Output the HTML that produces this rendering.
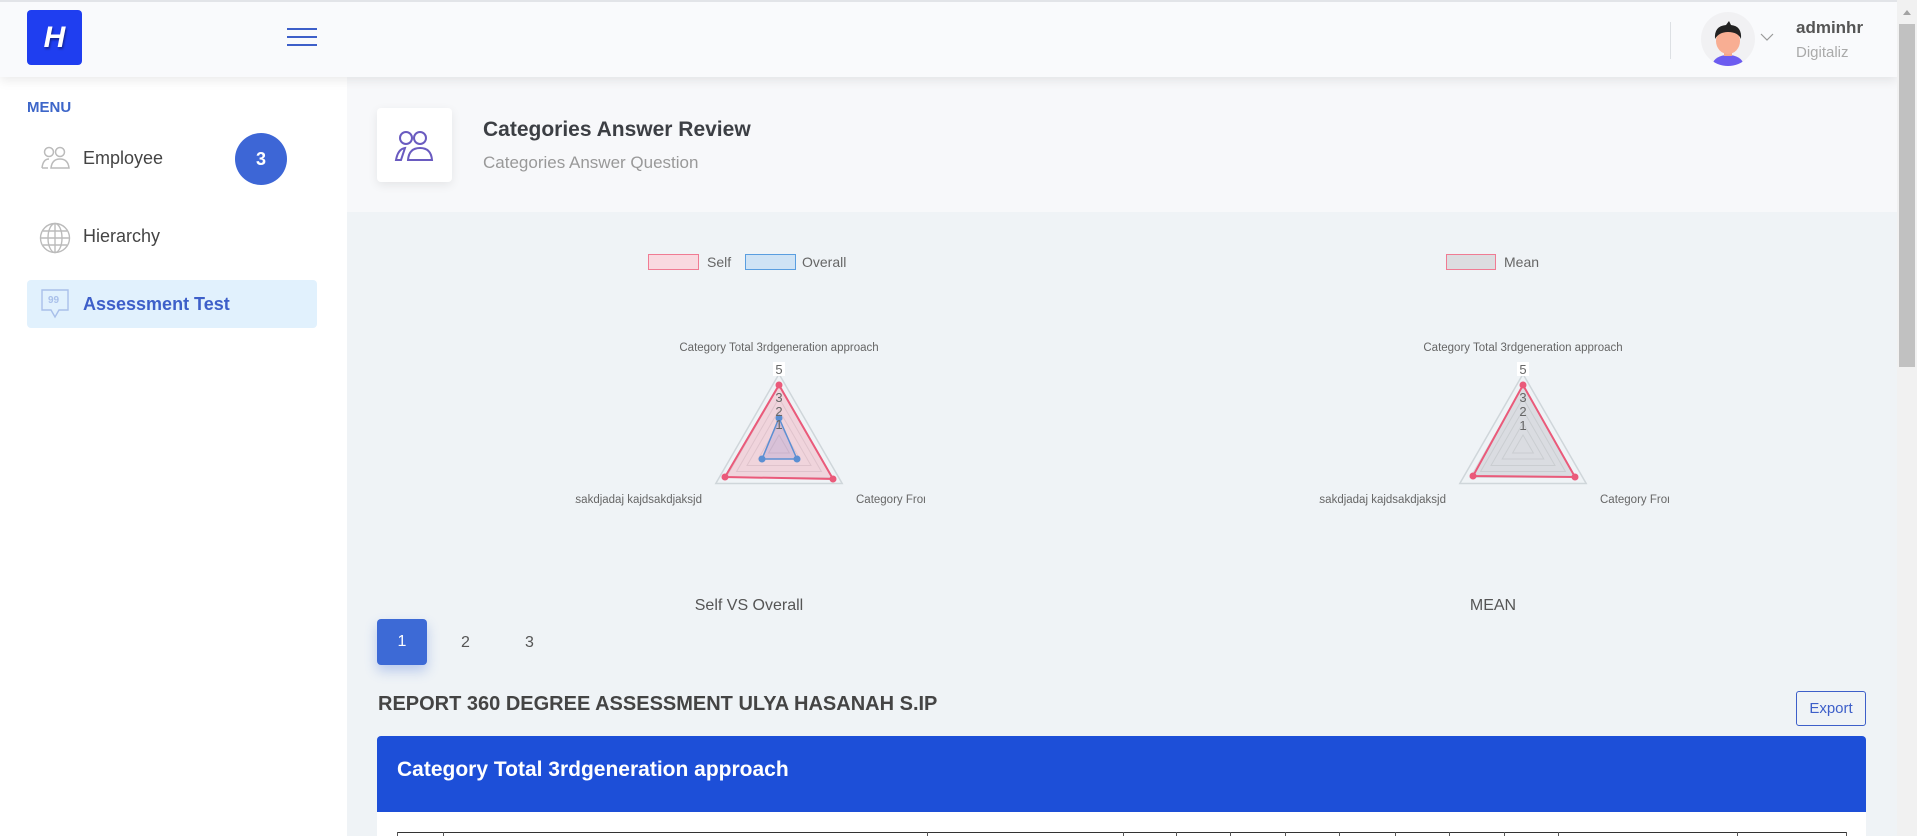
<!DOCTYPE html>
<html><head><meta charset="utf-8"><style>
*{box-sizing:border-box;margin:0;padding:0}
body{width:1917px;height:836px;overflow:hidden;background:#eff3f6;font-family:"Liberation Sans",sans-serif;position:relative}
.a{position:absolute}
</style></head><body>
<!-- header -->
<div class="a" style="left:0;top:0;width:1897px;height:77px;background:#f9fafc;border-top:2px solid #e2e4e8;box-shadow:0 4px 10px rgba(0,0,0,0.08);z-index:3"></div>
<div class="a" style="left:27px;top:10px;width:55px;height:55px;background:#1f3ef0;border-radius:4px;z-index:4;color:#fff;font-weight:bold;font-style:italic;font-size:30px;text-align:center;line-height:55px;text-shadow:1px 2px 2px rgba(0,0,0,.4)">H</div>
<div class="a" style="left:287px;top:28px;width:30px;z-index:4">
<div style="height:2px;background:#3d5fc9;margin-bottom:6px"></div><div style="height:2px;background:#3d5fc9;margin-bottom:6px"></div><div style="height:2px;background:#3d5fc9"></div></div>
<div class="a" style="left:1670px;top:22px;width:1px;height:37px;background:#dde0e4;z-index:4"></div>
<div class="a" style="left:1701px;top:12px;width:54px;height:54px;border-radius:50%;background:#f1f1f3;z-index:4;overflow:hidden">
<svg width="54" height="54" viewBox="0 0 54 54"><ellipse cx="27" cy="52" rx="15" ry="9" fill="#6c5cf0"/><rect x="23" y="36" width="8" height="8" fill="#f4a88c"/><ellipse cx="27" cy="29" rx="12" ry="13" fill="#f8ae93"/><path d="M14 27 Q13 14 25 13 L28 9 L30 13 Q41 14 40 27 Q37 20 27 20 Q18 20 14 27Z" fill="#222"/></svg></div>
<svg class="a" style="left:1760px;top:33px;z-index:4" width="14" height="9"><path d="M1 1 L7 7 L13 1" stroke="#999" fill="none" stroke-width="1.2"/></svg>
<div class="a" style="left:1796px;top:18px;font-size:17px;font-weight:bold;color:#555;z-index:4">adminhr</div>
<div class="a" style="left:1796px;top:44px;font-size:15px;color:#aaa;z-index:4">Digitaliz</div>
<!-- scrollbar -->
<div class="a" style="left:1897px;top:0;width:20px;height:836px;background:#f1f1f1;z-index:5"></div>
<div class="a" style="left:1899px;top:24px;width:16px;height:343px;background:#c1c1c1;z-index:6"></div>
<svg class="a" style="left:1901px;top:8px;z-index:6" width="12" height="8"><path d="M2 7 L6 2 L10 7Z" fill="#a3a3a3"/></svg>
<!-- sidebar -->
<div class="a" style="left:0;top:77px;width:347px;height:759px;background:#fff"></div>
<div class="a" style="left:27px;top:99px;font-size:15px;font-weight:bold;color:#3d66c9">MENU</div>
<svg class="a" style="left:40px;top:146px" width="30" height="24" viewBox="0 0 30 24" fill="none" stroke="#bbb" stroke-width="1.5"><circle cx="9" cy="6" r="4.5"/><circle cx="20" cy="6" r="4.5"/><path d="M2 22 Q3 13 9 13 M8 22 L2 22"/><path d="M11 22 Q12 13 20 13 Q28 13 29 22 Z"/></svg>
<div class="a" style="left:83px;top:148px;font-size:18px;color:#444">Employee</div>
<div class="a" style="left:235px;top:133px;width:52px;height:52px;border-radius:50%;background:#3d66d6;color:#fff;font-weight:bold;font-size:18px;text-align:center;line-height:52px">3</div>
<svg class="a" style="left:39px;top:222px" width="32" height="32" viewBox="0 0 32 32" fill="none" stroke="#bbb" stroke-width="1.4"><circle cx="16" cy="16" r="14.5"/><ellipse cx="16" cy="16" rx="7" ry="14.5"/><line x1="16" y1="1.5" x2="16" y2="30.5"/><line x1="1.5" y1="16" x2="30.5" y2="16"/><line x1="4" y1="9" x2="28" y2="9"/><line x1="4" y1="23" x2="28" y2="23"/></svg>
<div class="a" style="left:83px;top:226px;font-size:18px;color:#444">Hierarchy</div>
<div class="a" style="left:27px;top:280px;width:290px;height:48px;background:#e1f1fd;border-radius:4px"></div>
<svg class="a" style="left:40px;top:288px" width="30" height="32" viewBox="0 0 30 32" fill="none" stroke="#a9c0ea" stroke-width="1.4"><path d="M2 2 H28 V22 H19 L15 29 L11 22 H2 Z"/><text x="8" y="15" font-size="10" fill="#a9c0ea" stroke="none" font-weight="bold">99</text></svg>
<div class="a" style="left:83px;top:294px;font-size:18px;font-weight:bold;color:#3d5fc9">Assessment Test</div>
<!-- page header -->
<div class="a" style="left:347px;top:77px;width:1550px;height:135px;background:#f7f8fa"></div>
<div class="a" style="left:377px;top:108px;width:75px;height:74px;background:#fff;border-radius:4px;box-shadow:0 3px 10px rgba(0,0,0,0.08)"></div>
<svg class="a" style="left:394px;top:130px" width="42" height="32" viewBox="0 0 42 32" fill="none" stroke="#6a5bc0" stroke-width="2"><circle cx="12" cy="8" r="6"/><circle cx="26" cy="8" r="6"/><path d="M2 30 Q4 19 11 18 L7 30 Z"/><path d="M14 30 Q15 18 26 18 Q37 18 38 30 Z"/></svg>
<div class="a" style="left:483px;top:118px;font-size:21px;font-weight:bold;color:#3c3f44">Categories Answer Review</div>
<div class="a" style="left:483px;top:153px;font-size:17px;color:#999">Categories Answer Question</div>
<!-- legends -->
<div class="a" style="left:648px;top:254px;width:51px;height:16px;background:#f9d9e0;border:1.5px solid #f07b93"></div>
<div class="a" style="left:707px;top:254px;font-size:14px;color:#666">Self</div>
<div class="a" style="left:745px;top:254px;width:51px;height:16px;background:#cfe3f5;border:1.5px solid #5a9ee0"></div>
<div class="a" style="left:802px;top:254px;font-size:14px;color:#666">Overall</div>
<div class="a" style="left:1446px;top:254px;width:50px;height:16px;background:#dcdde0;border:1.5px solid #f07b93"></div>
<div class="a" style="left:1504px;top:254px;font-size:14px;color:#666">Mean</div>
<!-- charts -->
<svg class="a" style="left:575px;top:330px" width="350" height="190" font-family="Liberation Sans, sans-serif">
<g transform="translate(204,117)">
<g fill="none" stroke="#d9dde0" stroke-width="1">
<polygon points="0,-73 63.2,36.5 -63.2,36.5" stroke="#cfd6da" stroke-width="1.5"/>
<polygon points="0,-61 52.8,30.5 -52.8,30.5"/><polygon points="0,-49 42.4,24.5 -42.4,24.5"/>
<polygon points="0,-37 32,18.5 -32,18.5"/><polygon points="0,-24 20.8,12 -20.8,12"/><polygon points="0,-12 10.4,6 -10.4,6"/></g>
<polygon points="0,-62 54,32 -54,30" fill="rgba(242,120,145,0.25)" stroke="#ea5a7a" stroke-width="2"/>
<polygon points="0,-29 18,12 -17,12" fill="rgba(120,120,200,0.2)" stroke="#5b8fd3" stroke-width="1.5"/>
<g fill="#ea5a7a"><circle cx="0" cy="-62" r="3.5"/><circle cx="54" cy="32" r="3.5"/><circle cx="-54" cy="30" r="3.5"/></g>
<g fill="#5b8fd3"><circle cx="0" cy="-29" r="3.5"/><circle cx="18" cy="12" r="3.5"/><circle cx="-17" cy="12" r="3.5"/></g>
<rect x="-6" y="-85" width="12" height="14" fill="#fff"/>
<g font-size="13" fill="#666" text-anchor="middle"><text y="-73">5</text><text y="-45">3</text><text y="-31">2</text><text y="-18">1</text></g>
<text x="0" y="-96" font-size="11.5" fill="#666" text-anchor="middle">Category Total 3rdgeneration approach</text>
<text x="-77" y="56" font-size="11.5" fill="#666" text-anchor="end">jasakdjadaj kajdsakdjaksjd</text>
<text x="77" y="56" font-size="11.5" fill="#666">Category Front</text>
</g></svg>
<svg class="a" style="left:1319px;top:330px" width="350" height="190" font-family="Liberation Sans, sans-serif">
<g transform="translate(204,117)">
<g fill="none" stroke="#d9dde0" stroke-width="1">
<polygon points="0,-73 63.2,36.5 -63.2,36.5" stroke="#cfd6da" stroke-width="1.5"/>
<polygon points="0,-61 52.8,30.5 -52.8,30.5"/><polygon points="0,-49 42.4,24.5 -42.4,24.5"/>
<polygon points="0,-37 32,18.5 -32,18.5"/><polygon points="0,-24 20.8,12 -20.8,12"/><polygon points="0,-12 10.4,6 -10.4,6"/></g>
<polygon points="0,-62 52,30 -50,29" fill="rgba(170,170,175,0.3)" stroke="#ea5a7a" stroke-width="2"/>
<g fill="#ea5a7a"><circle cx="0" cy="-62" r="3.5"/><circle cx="52" cy="30" r="3.5"/><circle cx="-50" cy="29" r="3.5"/></g>
<rect x="-6" y="-85" width="12" height="14" fill="#fff"/>
<g font-size="13" fill="#666" text-anchor="middle"><text y="-73">5</text><text y="-45">3</text><text y="-31">2</text><text y="-17">1</text></g>
<text x="0" y="-96" font-size="11.5" fill="#666" text-anchor="middle">Category Total 3rdgeneration approach</text>
<text x="-77" y="56" font-size="11.5" fill="#666" text-anchor="end">jasakdjadaj kajdsakdjaksjd</text>
<text x="77" y="56" font-size="11.5" fill="#666">Category Front</text>
</g></svg>
<div class="a" style="left:649px;top:597px;width:200px;text-align:center;font-size:16px;color:#555">Self VS Overall</div>
<div class="a" style="left:1393px;top:597px;width:200px;text-align:center;font-size:16px;color:#555">MEAN</div>
<!-- pagination -->
<div class="a" style="left:377px;top:619px;width:50px;height:46px;background:#3d6ad6;border-radius:4px;box-shadow:0 6px 12px rgba(61,106,214,0.3);color:#fff;font-size:16px;text-align:center;line-height:46px">1</div>
<div class="a" style="left:461px;top:634px;font-size:16px;color:#555">2</div>
<div class="a" style="left:525px;top:634px;font-size:16px;color:#555">3</div>
<div class="a" style="left:378px;top:693px;font-size:20px;font-weight:bold;color:#444">REPORT 360 DEGREE ASSESSMENT ULYA HASANAH S.IP</div>
<div class="a" style="left:1796px;top:691px;width:70px;height:35px;border:1px solid #3d5fc9;border-radius:3px;color:#3d5fc9;font-size:15px;text-align:center;line-height:33px">Export</div>
<!-- card -->
<div class="a" style="left:377px;top:736px;width:1489px;height:76px;background:#1d4fd8;border-radius:4px 4px 0 0;color:#fff;font-weight:bold;font-size:21px;padding:22px 0 0 20px">Category Total 3rdgeneration approach</div>
<div class="a" style="left:377px;top:812px;width:1489px;height:24px;background:#fff"></div>
<div class="a" style="left:397px;top:832px;width:1450px;height:4px;border-top:1.5px solid #333"></div>
<svg class="a" style="left:0;top:832px" width="1897" height="4"><g stroke="#555" stroke-width="1"><line x1="397.5" y1="0" x2="397.5" y2="4"/><line x1="443.5" y1="0" x2="443.5" y2="4"/><line x1="927.5" y1="0" x2="927.5" y2="4"/><line x1="1123.5" y1="0" x2="1123.5" y2="4"/><line x1="1176.5" y1="0" x2="1176.5" y2="4"/><line x1="1230.5" y1="0" x2="1230.5" y2="4"/><line x1="1285.5" y1="0" x2="1285.5" y2="4"/><line x1="1339.5" y1="0" x2="1339.5" y2="4"/><line x1="1395.5" y1="0" x2="1395.5" y2="4"/><line x1="1449.5" y1="0" x2="1449.5" y2="4"/><line x1="1504.5" y1="0" x2="1504.5" y2="4"/><line x1="1558.5" y1="0" x2="1558.5" y2="4"/><line x1="1737.5" y1="0" x2="1737.5" y2="4"/><line x1="1846.5" y1="0" x2="1846.5" y2="4"/></g></svg>
</body></html>
